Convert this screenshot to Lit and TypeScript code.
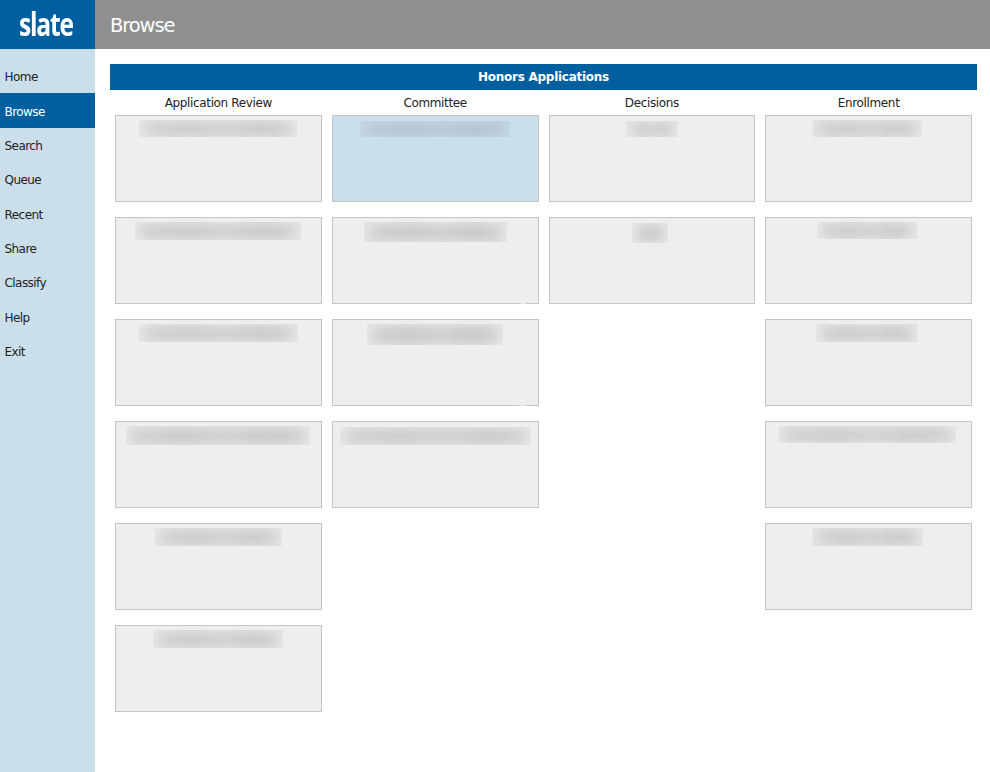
import { LitElement, html, css } from "lit";
import { customElement } from "lit/decorators.js";

interface Card { w: number; h: number; top: number; shift?: number; active?: boolean; glint?: boolean }
const columns: { title: string; cards: Card[] }[] = [
  { title: "Application Review", cards: [
    { w: 158, h: 17, top: 5 }, { w: 166, h: 18, top: 5 }, { w: 159, h: 18, top: 5 },
    { w: 184, h: 19, top: 5 }, { w: 127, h: 18, top: 5 }, { w: 130, h: 18, top: 5 } ] },
  { title: "Committee", cards: [
    { w: 150, h: 16, top: 6, active: true }, { w: 143, h: 20, top: 5, glint: true }, { w: 136, h: 21, top: 5, glint: true }, { w: 191, h: 18, top: 6 } ] },
  { title: "Decisions", cards: [ { w: 52, h: 16, top: 6 }, { w: 36, h: 20, top: 6, shift: 3 } ] },
  { title: "Enrollment", cards: [
    { w: 110, h: 17, top: 5, shift: 3 }, { w: 100, h: 17, top: 5, shift: 3 }, { w: 102, h: 18, top: 5, shift: 3 }, { w: 177, h: 17, top: 5, shift: 2 }, { w: 111, h: 18, top: 5, shift: 2 } ] },
];
const nav = ["Home", "Browse", "Search", "Queue", "Recent", "Share", "Classify", "Help", "Exit"];

@customElement("app-root")
export class AppRoot extends LitElement {
  static styles = css`
    :host { display: grid; grid-template-columns: 95px 1fr; grid-template-rows: 49px 1fr; width: 990px; height: 772px; overflow: hidden; font-family: "DejaVu Sans", sans-serif; color: #222; background: #fff; }
    .logo { background: #00609f; color: #fff; display: flex; align-items: center; justify-content: center; font-family: "Open Sans", sans-serif; font-size: 32px; font-weight: 700; letter-spacing: -1.6px; padding: 0 4px 3px 0; box-sizing: border-box; }
    .logo span { display: block; transform: scaleX(0.77); }
    .topbar { background: #8f8f8f; color: #fff; display: flex; align-items: center; padding: 2px 0 0 15px; box-sizing: border-box; font-size: 19.5px; letter-spacing: -1.1px; }
    .side { background: #cbdfea; padding-top: 10px; }
    .side a { display: flex; align-items: center; height: 34.33px; box-sizing: border-box; padding: 2.6px 0 0 4.5px; font-size: 12px; letter-spacing: -0.55px; color: #222; }
    .side a.on { background: #00609f; color: #fff; }
    main { padding: 15px 13px 0 15px; }
    .banner { background: #00609f; color: #fff; text-align: center; font-weight: 700; font-size: 12px; letter-spacing: -0.27px; height: 26px; line-height: 27px; }
    .cols { display: grid; grid-template-columns: repeat(4, 1fr); }
    .col { padding: 0 5px; display: flex; flex-direction: column; }
    .col h3 { margin: 0; font-weight: 400; font-size: 12px; letter-spacing: -0.35px; text-align: center; height: 25px; line-height: 27px; }
    .card { position: relative; height: 87px; box-sizing: border-box; margin-bottom: 15px; background: #eee; border: 1px solid #c4c4c4; display: flex; flex-direction: column; align-items: center; }
    .card.active { background: #cbdfea; }
    .card.glint::after { content: ""; position: absolute; right: 10px; bottom: -1px; width: 10px; height: 1px; background: linear-gradient(90deg, #c4c4c4, #eee, #c4c4c4); }
    .patch { overflow: hidden; background: #e8e8e8; display: flex; align-items: center; justify-content: center; }
    .active .patch { background: #c5d9e4; }
    .patch i { display: block; width: calc(100% - 10px); height: calc(100% - 3px); background: linear-gradient(90deg, #d0d0d0, #c8c8c8 30%, #cfcfcf 55%, #c6c6c6 80%, #d0d0d0); filter: blur(6px); }
    .active .patch i { background: linear-gradient(90deg, #b6c9d4, #afc2cd 30%, #b5c8d3 55%, #adc0cb 80%, #b6c9d4); }
  `;
  render() {
    return html`
      <div class="logo"><span>slate</span></div>
      <div class="topbar">Browse</div>
      <nav class="side">${nav.map((n) => html`<a class=${n === "Browse" ? "on" : ""}>${n}</a>`)}</nav>
      <main>
        <div class="banner">Honors Applications</div>
        <div class="cols">
          ${columns.map((c) => html`<section class="col">
            <h3>${c.title}</h3>
            ${c.cards.map((k) => html`<div class="card ${k.active ? "active" : ""} ${k.glint ? "glint" : ""}">
              <div class="patch" style="width:${k.w}px;height:${k.h}px;margin-top:${k.top - 1}px;margin-right:${k.shift ?? 0}px"><i></i></div>
            </div>`)}
          </section>`)}
        </div>
      </main>`;
  }
}
